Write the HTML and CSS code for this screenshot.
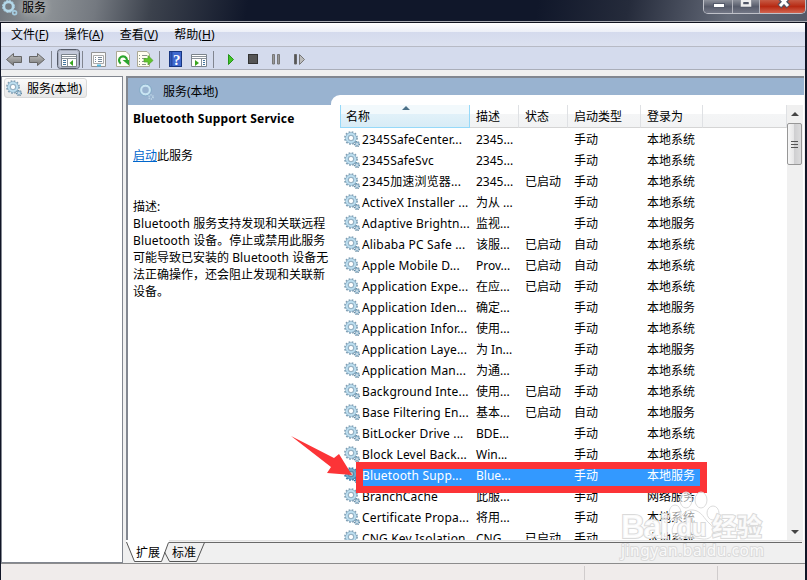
FILE: index.html
```html
<!DOCTYPE html>
<html lang="zh-CN">
<head>
<meta charset="utf-8">
<title>服务</title>
<link rel="stylesheet" href="styles.css">
</head>
<body>
<svg class="defs" width="0" height="0">
  <defs>
    <linearGradient id="grey" x1="0" y1="0" x2="0" y2="1"><stop offset="0" stop-color="#c4c4c4"/><stop offset="1" stop-color="#777"/></linearGradient>
    <symbol id="gear" viewBox="0 0 16 16">
      <circle cx="7" cy="7" r="6" fill="none" stroke="#7d9db2" stroke-width="1.8" stroke-dasharray="1.7 1.44"/>
      <circle cx="7" cy="7" r="4.200" fill="#fff" stroke="#8fb3ca" stroke-width="3"/>
      <circle cx="7" cy="7" r="4.200" fill="none" stroke="#bfe0f1" stroke-width="1.800"/>
      <circle cx="7" cy="7" r="2.600" fill="none" stroke="#7697ac" stroke-width=".7"/>
      <circle cx="13" cy="13" r="2.400" fill="none" stroke="#66889f" stroke-width="1.400" stroke-dasharray="1.1 .78"/>
      <circle cx="13" cy="13" r="1.500" fill="#fff" stroke="#8cb2ca" stroke-width="1.300"/>
    </symbol>
  </defs>
</svg>
<div class="window">
  <header class="titlebar">
    <svg class="title-icon" width="17" height="17" viewBox="0 0 17 17"><circle cx="6.500" cy="6.500" r="4.600" fill="#777e85" stroke="#b4d8ea" stroke-width="2.600"/><circle cx="6.500" cy="6.500" r="6.100" fill="none" stroke="#a9cfe4" stroke-width="1" stroke-dasharray="1.8 1.4"/><circle cx="12.600" cy="12.800" r="1.900" fill="none" stroke="#a4cbe0" stroke-width="1.700"/></svg>
    <h1>服务</h1>
    <div class="caption">
      <span class="cap min"><svg width="30" height="13"><rect x="9.500" y="3.500" width="11" height="4" fill="#fff" stroke="#555b6b"/></svg></span>
      <span class="cap max"><svg width="26" height="13"><path d="M8.500 -2V6.500H17.500V-2Z" fill="none" stroke="#505667" stroke-width="2"/><path d="M9 -2V5.500H17V-2M9 1H17" fill="none" stroke="#eee" stroke-width="2.600"/><path d="M10.500 3H15.500" stroke="#505667" stroke-width="2"/></svg></span>
      <span class="cap close"><svg width="47" height="13"><path d="M19.500 -3L28.500 6.500M28.500 -3L19.500 6.500" stroke="#525463" stroke-width="5.500"/><path d="M19.500 -3L28 6M28.500 -3L20 6" stroke="#fff" stroke-width="3"/></svg></span>
    </div>
  </header>
  <div class="frame">
    <nav class="menu"><span>文件(<u>F</u>)</span><span>操作(<u>A</u>)</span><span>查看(<u>V</u>)</span><span>帮助(<u>H</u>)</span></nav>
    <div class="toolbar">
      <svg width="320" height="23" viewBox="0 0 320 23">
        <g stroke="#666" fill="url(#grey)"><path d="M5.500 12.500L12.500 6.500V9.500H20.500V15.500H12.500V18.500Z"/><path d="M43.500 12.500L36.500 6.500V9.500H28.500V15.500H36.500V18.500Z"/></g>
        <path d="M50.500 4V21M81.500 4V21M158.500 4V21M212.500 4V21" stroke="#81858f"/>
        <rect x="56.500" y="2.500" width="22" height="19" rx="3" fill="#c3c9da" stroke="#555b68"/><rect x="57.500" y="3.500" width="20" height="17" rx="2" fill="none" stroke="#a5abba"/>
        <path d="M60.500 7.500H75.500V19.500H60.500Z" fill="#fff" stroke="#7b838b"/><path d="M61 9.500H75M61 11.500H75M66.500 12V19" stroke="#8b939b"/><path d="M62 13.500H65M62 15.500H65M62 17.500H65" stroke="#45769e"/><path d="M72 13V19L68.500 16Z" fill="#38a51d"/>
        <path d="M90.500 5.500H104.500V19.500H90.500Z" fill="#f8f8f8" stroke="#949494"/><path d="M92.500 8.500H102.500V16.500H92.500Z" fill="#fff" stroke="#aaa"/><path d="M94 10.500H95M97 10.500H101M94 12.500H95M97 12.500H101M94 14.500H95M97 14.500H101" stroke="#789"/><path d="M96 18.500H100" stroke="#55b8df" stroke-width="2"/>
        <path d="M115.500 4.500H125L128.500 8V19.500H115.500Z" fill="#fffef8" stroke="#aba995"/><path d="M119.700 16.600A4 4 0 1 1 126 13" fill="none" stroke="#2ba52d" stroke-width="2.200"/><path d="M121.500 13H128V18.500Z" fill="#2ba52d"/>
        <path d="M136.500 4.500H146L148.500 7V19.500H136.500Z" fill="#fffef0" stroke="#aba995"/><path d="M138 8.500H139M141 8.500H146M138 11.500H139M141 11.500H145M138 14.500H139M141 14.500H144M138 17.500H139M141 17.500H145" stroke="#8b938f"/><path d="M143 11.500H147V8.500L152 13.500L147 18V15H143Z" fill="#61c52d" stroke="#4ba328" stroke-width=".7"/>
        <rect x="168.500" y="4.500" width="12" height="15" fill="#3f69cf" stroke="#173681"/><path d="M170.500 5V19" stroke="#2449a3" stroke-width="2"/><text x="172" y="17.500" class="question">?</text>
        <path d="M190.500 7.500H205.500V19.500H190.500Z" fill="#fff" stroke="#7b838b"/><path d="M191 9.500H205M191 11.500H205M200.500 12V19" stroke="#8b939b"/><path d="M202 13.500H204M202 15.500H204M202 17.500H204" stroke="#45769e"/><path d="M194 13V19L198 16Z" fill="#38a51d"/>
        <path d="M227.500 7.500V17.500L232.500 12.500Z" fill="#43c327" stroke="#24951a"/>
        <rect x="247.500" y="7.500" width="9" height="9" fill="#555" stroke="#333"/>
        <path d="M271.500 7.500H273.500V17H271.500ZM276.500 7.500H278.500V17H276.500Z" fill="#999" stroke="#777"/>
        <path d="M293.500 7.500H295.500V17H293.500Z" fill="#555" stroke="#666"/><path d="M298.500 7.500V17.500L303.500 12.500Z" fill="#bbb" stroke="#777"/>
      </svg>
    </div>
    <main class="work">
      <aside class="tree"><div class="node"><svg width="16" height="16"><use href="#gear"/></svg><span>服务(本地)</span></div></aside>
      <section class="right">
        <div class="pane">
          <div class="banner">
            <div class="banner-title"><svg width="16" height="16" viewBox="0 0 16 16"><circle cx="7.500" cy="6" r="4.500" fill="none" stroke="#c8e4f2" stroke-width="2.400"/><circle cx="7.500" cy="6" r="5.900" fill="none" stroke="#7fa8c4" stroke-width=".8"/><circle cx="13" cy="13" r="2" fill="none" stroke="#c0d9e9" stroke-width="1.700" stroke-dasharray="1 1"/></svg><span>服务(本地)</span></div>
            <div class="notch"></div>
          </div>
          <div class="pane-body">
            <article class="info">
              <h2>Bluetooth Support Service</h2>
              <p class="action"><a>启动</a>此服务</p>
              <p class="desc">描述:<br><span class="en">Bluetooth</span> 服务支持发现和关联远程<br><span class="en">Bluetooth</span> 设备。停止或禁用此服务<br>可能导致已安装的 <span class="en">Bluetooth</span> 设备无<br>法正确操作，还会阻止发现和关联新<br>设备。</p>
            </article>
            <div class="list">
              <div class="row head"><span class="sorted">名称<svg class="sort" width="8" height="5"><path d="M0 4L4 0L8 4Z" fill="#4c7188"/></svg></span><span>描述</span><span>状态</span><span>启动类型</span><span>登录为</span><span></span></div>
              <div id="rows"></div>
            </div>
            <div class="scroll"><svg width="16" height="16"><path d="M4 11L8 7L12 11Z" fill="#444"/></svg><div class="thumb"><i></i><i></i><i></i></div><svg class="down" width="16" height="16"><path d="M4 6L8 10L12 6Z" fill="#444"/></svg></div>
          </div>
        </div>
        <div class="tabs">
          <svg width="677" height="23"><path d="M0 .5H676" stroke="#e3e3e3"/><path d="M41.500 2.500H676" stroke="#696969"/><path d="M0 1L8.500 21.500H35.500L43 2V0H0Z" fill="#fff"/><path d="M.500 2L8.500 21.500H35.500L42.500 2.500M38.500 12L43.500 21.500H70.500L78.500 2.500" fill="none" stroke="#555"/></svg>
          <div class="tab-text"><span>扩展</span><span>标准</span></div>
        </div>
      </section>
    </main>
    <footer class="status"><span></span><span></span><span></span></footer>
  </div>
  <div class="selection-box"></div>
  <svg class="arrow" width="64" height="42" viewBox="0 0 64 42"><path d="M1 0L44 22L49 18L62 39L37 37L41 31Z" fill="#fc3437"/></svg>
  <svg class="watermark" width="160" height="80" viewBox="0 0 160 80">
    <g fill="#fff" fill-opacity=".6" stroke="#dcdcdc">
      <ellipse cx="64" cy="25" rx="6" ry="8"/><ellipse cx="75" cy="12" rx="6" ry="8"/><ellipse cx="90" cy="12" rx="6" ry="8"/><ellipse cx="102" cy="25" rx="6" ry="7"/>
      <path d="M82 22C73 21 71 29 65 34C58 41 61 52 70 51Q80 48 92 51C102 52 106 42 99 36C93 31 91 23 82 22Z"/>
    </g>
    <text x="10" y="50" class="bai" textLength="48">Bai</text><text x="66" y="48" class="du">du</text><text x="101" y="48" class="jing">经验</text><text x="10" y="68" class="url" textLength="143">jingyan.baidu.com</text>
  </svg>
</div>
<script src="app.js"></script>
</body>
</html>
```
FILE: styles.css
```css
* { box-sizing: border-box; }
body { margin: 0; width: 807px; height: 580px; overflow: hidden; font: 12px/17px "Noto Sans", "Noto Sans CJK SC", sans-serif; color: #000; }
h1, h2, p { margin: 0; font-size: 12px; font-weight: normal; }
.defs { position: absolute; }
.window { position: relative; width: 807px; height: 580px; display: flex; flex-direction: column; overflow: hidden; background: #101526; }
.titlebar { height: 23px; flex: none; display: flex; align-items: flex-start; background: linear-gradient(100deg, #6f757c 0, #8f9498 45px, #747980 95px, #3c424d 150px, #10172a 245px, #10172a 530px, #252b3b 620px, #646a78 720px, #505665 807px); border-bottom: 1px solid #10131f; box-shadow: inset 0 -1px #a8abb2; }
.title-icon { margin: 0 0 0 2px; }
.titlebar h1 { margin: -1px 0 0 3px; text-shadow: 0 0 8px #ccc, 0 0 10px #bbb; }
.caption { display: flex; margin-left: auto; margin-right: 1px; width: 103px; height: 14px; border: 1px solid #bfc1c9; border-top: 0; border-radius: 0 0 5px 5px; overflow: hidden; }
.cap { height: 13px; background: linear-gradient(#8c909a, #575c6b 50%, #737786); border-right: 1px solid #b2b4bd; }
.cap svg { display: block; }
.min { width: 29px; } .max { width: 27px; } .close { flex: 1; border: 0; background: linear-gradient(#c65b45, #b72912 50%, #d26551); }
.frame { flex: 1; min-height: 0; margin: 0 2px 0 1px; display: flex; flex-direction: column; background: #f0f0f0; }
.menu { height: 24px; flex: none; display: flex; gap: 16px; padding: 3px 10px; background: linear-gradient(#fff, #edf0f8 37%, #d4daed 38%, #dce1f0); border-bottom: 1px solid #b7bac5; letter-spacing: .03px; }
.menu u { text-underline-offset: 1px; }
.toolbar { height: 23px; flex: none; background: #d4dbed; border-bottom: 1px solid #aaaeb9; }
.toolbar svg { display: block; }
.question { fill: #fff; font: bold 15px "Liberation Serif", serif; }
.work { height: 495px; flex: none; display: flex; gap: 3px; padding: 6px 1px 2px 0; }
.tree { width: 122px; height: 487px; border: 1px solid #828790; background: #fff; padding: 1px 2px; }
.node { width: 83px; height: 20px; display: flex; gap: 5px; align-items: center; padding-left: 1px; border: 1px solid #d9d9d9; border-radius: 3px; background: linear-gradient(#fafafa, #e8e8e8); }
.right { width: 678px; height: 487px; }
.pane { height: 464px; border: 1px solid #828790; border-width: 2px 0 0 2px; background: #fff; }
.banner { height: 27px; display: flex; background: #99b3d0; }
.banner-title { width: 203px; display: flex; align-items: center; gap: 9px; padding-left: 10px; }
.notch { flex: 1; margin-top: 17px; background: #fff; border-top-left-radius: 9px; }
.pane-body { height: 435px; display: flex; }
.info { width: 212px; padding: 5px 0 0 5px; }
.info h2 { font-weight: bold; letter-spacing: .2px; white-space: nowrap; }
.action { margin-top: 20px; } .action a { color: #06c; text-decoration: underline; }
.desc { margin-top: 34px; white-space: nowrap; } .en { letter-spacing: .15px; }
.list { width: 447px; height: 435px; overflow: hidden; }
.row { height: 21px; display: grid; grid-template-columns: 130px 49px 49px 73px 62px 84px; }
.row > span { padding-left: 6px; line-height: 21px; white-space: nowrap; overflow: hidden; }
.row.head { height: 24px; }
.head > span { position: relative; height: 23px; line-height: 24px; border-right: 1px solid #dfe1e4; border-bottom: 1px solid #d5d5d5; background: linear-gradient(#fff 40%, #f4f5f6 41%, #f2f3f4); }
.head .sorted { border: solid #96d9f9; border-width: 0 1px 1px; background: linear-gradient(#f2f9fc 40%, #e1f1f9 41%, #d8ecf6); padding-left: 5px; }
.sort { position: absolute; left: 61px; top: 1px; }
.row .name { display: flex; align-items: center; gap: 2px; padding-left: 4px; letter-spacing: .17px; }
.name svg { flex: none; margin-top: -2px; }
.selected { color: #fff; }
.selected > span { background: #39f; }
.selected > span:first-child { background: linear-gradient(90deg, #fff 18px, #39f 18px); }
.selected > span:last-child { background: none; }
.selected svg { filter: brightness(.75) saturate(2.6); }
.scroll { width: 16px; display: flex; flex-direction: column; background: #f0f0f0; }
.scroll svg { flex: none; }
.thumb { height: 42px; margin: 2px 1px 0 0; border: 1px solid #979797; border-radius: 2px; background: linear-gradient(90deg, #f6f6f6, #e6e6e7 45%, #cfcfd1 50%, #dcdcdd); display: flex; flex-direction: column; align-items: center; justify-content: center; gap: 2px; }
.thumb i { width: 7px; height: 1px; background: #555; }
.down { margin-top: auto; }
.tabs { height: 23px; position: relative; }
.tabs svg { display: block; }
.tab-text { position: absolute; left: 10px; top: 4px; display: flex; gap: 12px; }
.status { flex: 1; display: flex; background: #f0eceb; border-top: 1px solid #8c8c8c; margin-top: -2px; }
.status span { border-right: 1px solid #d0cccc; margin-top: 2px; } .status span:first-child { width: 584px; } .status span:nth-child(2) { width: 133px; } .status span:last-child { flex: 1; border: 0; }
.selection-box { position: absolute; left: 356px; top: 462px; width: 351px; height: 31px; border: 7px solid #fc3437; }
.arrow { position: absolute; left: 290px; top: 436px; }
.watermark { position: absolute; left: 611px; top: 488px; }
.watermark text { fill: #fff; fill-opacity: .85; stroke: #dadada; stroke-width: 2px; paint-order: stroke; font-family: "Liberation Sans", "Noto Sans CJK SC", sans-serif; }
.watermark .bai { font-size: 33px; font-weight: bold; } .watermark .du { font-size: 24px; font-weight: bold; } .watermark .jing { font: bold 25px "Noto Sans CJK SC", sans-serif; } .watermark .url { font-family: "Noto Sans", sans-serif; font-size: 15.5px; }
```
FILE: app.js
```javascript
const services = [
  ["2345SafeCenter...", "2345...", 0, "手动", "本地系统"],
  ["2345SafeSvc", "2345...", 0, "手动", "本地系统"],
  ["2345加速浏览器...", "2345...", 1, "手动", "本地系统"],
  ["ActiveX Installer ...", "为从 ...", 0, "手动", "本地系统"],
  ["Adaptive Brightn...", "监视...", 0, "手动", "本地服务"],
  ["Alibaba PC Safe ...", "该服...", 1, "自动", "本地系统"],
  ["Apple Mobile D...", "Prov...", 1, "自动", "本地系统"],
  ["Application Expe...", "在应...", 1, "手动", "本地系统"],
  ["Application Iden...", "确定...", 0, "手动", "本地服务"],
  ["Application Infor...", "使用...", 0, "手动", "本地系统"],
  ["Application Laye...", "为 In...", 0, "手动", "本地服务"],
  ["Application Man...", "为通...", 0, "手动", "本地系统"],
  ["Background Inte...", "使用...", 1, "手动", "本地系统"],
  ["Base Filtering En...", "基本...", 1, "自动", "本地服务"],
  ["BitLocker Drive ...", "BDE...", 0, "手动", "本地系统"],
  ["Block Level Back...", "Win...", 0, "手动", "本地系统"],
  ["Bluetooth Supp...", "Blue...", 0, "手动", "本地服务"],
  ["BranchCache", "此服...", 0, "手动", "网络服务"],
  ["Certificate Propa...", "将用...", 0, "手动", "本地系统"],
  ["CNG Key Isolation", "CNG ...", 1, "手动", "本地系统"]
];
document.getElementById("rows").innerHTML = services.map(([name, desc, running, start, logon], i) =>
  `<div class="row${i === 16 ? " selected" : ""}"><span class="name"><svg width="16" height="16"><use href="#gear"/></svg>${name}</span><span>${desc}</span><span>${running ? "已启动" : ""}</span><span>${start}</span><span>${logon}</span><span></span></div>`
).join("");
```
